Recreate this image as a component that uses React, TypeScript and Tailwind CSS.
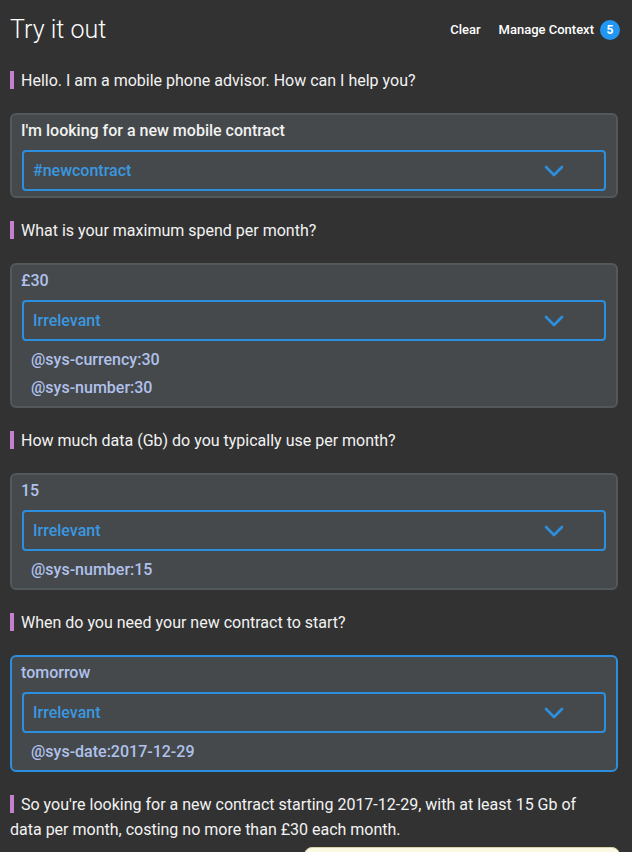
type Turn = {
  bot: string;
  input: string;
  intent: string;
  entities: string[];
  active?: boolean;
};

const turns: Turn[] = [
  { bot: 'Hello. I am a mobile phone advisor. How can I help you?', input: "I'm looking for a new mobile contract", intent: '#newcontract', entities: [] },
  { bot: 'What is your maximum spend per month?', input: '£30', intent: 'Irrelevant', entities: ['@sys-currency:30', '@sys-number:30'] },
  { bot: 'How much data (Gb) do you typically use per month?', input: '15', intent: 'Irrelevant', entities: ['@sys-number:15'] },
  { bot: 'When do you need your new contract to start?', input: 'tomorrow', intent: 'Irrelevant', entities: ['@sys-date:2017-12-29'], active: true },
];

function BotMessage({ text }: { text: string }) {
  return (
    <div className="pl-[10px] pr-[26px] text-[16px] leading-[25px] text-[#f2f2f2]">
      <span className="inline-block w-[4px] h-[18px] bg-[#c57fcf] align-[-3px] mr-[7px]"></span>
      {text}
    </div>
  );
}

function Chevron() {
  return (
    <svg width="20" height="12" viewBox="0 0 20 12" fill="none" className="text-[#2b8ede]">
      <path d="M2 2 L10 10 L18 2" stroke="currentColor" strokeWidth="2.6" strokeLinecap="round" strokeLinejoin="round" />
    </svg>
  );
}

function UserCard({ turn }: { turn: Turn }) {
  const first = turn.entities.length === 0;
  return (
    <div
      className={
        'ml-[10px] mr-[14px] rounded-[6px] border-2 bg-[#45494b] px-[10px] pt-[5px] ' +
        (turn.active ? 'border-[#2b8ede] ' : 'border-[#53585a] ') +
        (first ? 'pb-[5px]' : 'pb-[4px]')
      }
    >
      <div className={'-ml-[1px] text-[16px] leading-[22px] font-medium ' + (first ? 'text-[#f2f2f2]' : 'text-[#b0c1ec]')}>{turn.input}</div>
      <div className="mt-[8px] h-[41px] rounded-[4px] border-2 border-[#2b8ede] flex items-center justify-between pl-[9px] pr-[40px]">
        <span className="text-[16px] font-medium text-[#3a98e0]">{turn.intent}</span>
        <Chevron />
      </div>
      {turn.entities.length > 0 && (
        <div className="pt-[5px] pl-[9px]">
          {turn.entities.map((e) => (
            <div key={e} className="text-[16px] leading-[28px] font-medium text-[#b0c1ec]">{e}</div>
          ))}
        </div>
      )}
    </div>
  );
}

export default function App() {
  return (
    <div className="w-[632px] h-[852px] overflow-hidden bg-[#323232] font-['Roboto',sans-serif]">
      <div className="flex items-center justify-between pl-[10px] pr-[12px] pt-[9px] h-[50px]">
        <h1 className="text-[25px] font-light text-white">Try it out</h1>
        <div className="flex items-center gap-[18px] text-[13px] font-medium text-white">
          <span>Clear</span>
          <span className="flex items-center gap-[6px]">
            Manage Context
            <span className="w-[20px] h-[20px] rounded-full bg-[#2196f3] flex items-center justify-center text-[12px] font-bold">5</span>
          </span>
        </div>
      </div>
      <div className="pt-[18px] flex flex-col">
        {turns.map((t, i) => (
          <div key={i} className="flex flex-col">
            <BotMessage text={t.bot} />
            <div className="h-[20px]"></div>
            <UserCard turn={t} />
            <div className="h-[20px]"></div>
          </div>
        ))}
        <BotMessage text="So you're looking for a new contract starting 2017-12-29, with at least 15 Gb of data per month, costing no more than £30 each month." />
        <div className="flex justify-end pr-[12px] mt-[5px]">
          <div className="w-[316px] h-[40px] rounded-[8px] bg-[#fbf8e4] border border-[#d8d2a8]"></div>
        </div>
      </div>
    </div>
  );
}
